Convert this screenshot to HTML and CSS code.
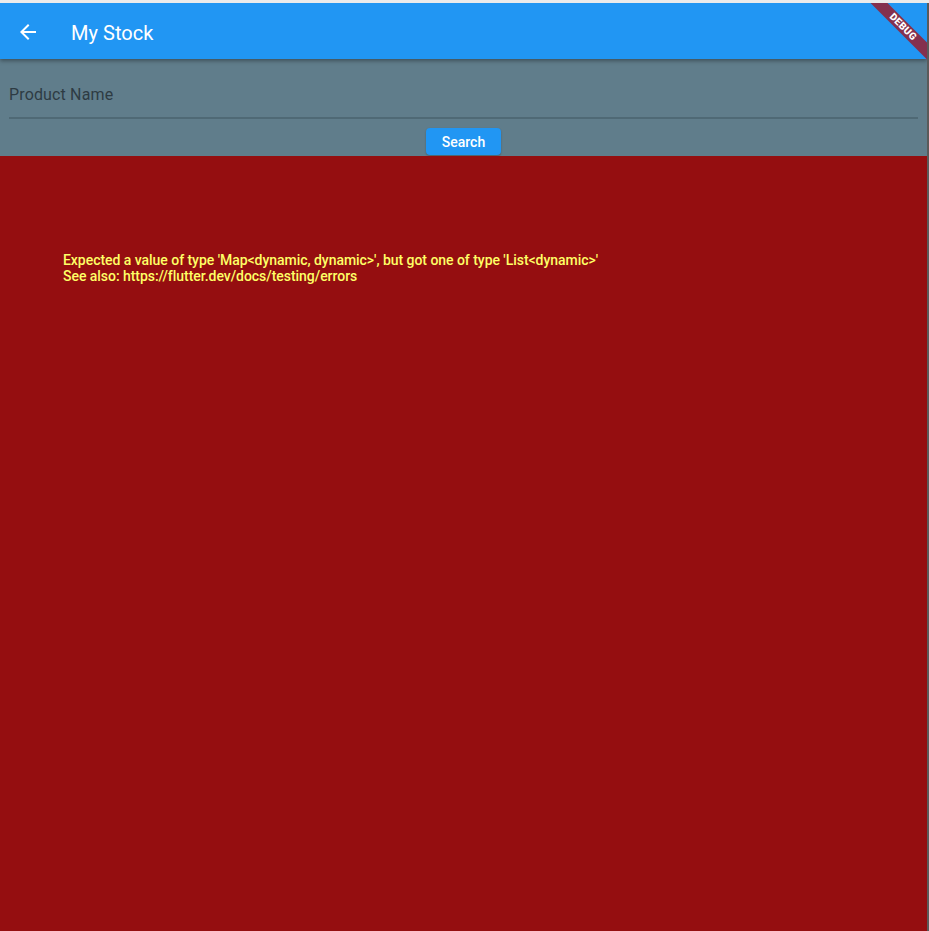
FILE: index.html
```html
<!DOCTYPE html>
<html>
<head>
<meta charset="utf-8">
<link rel="stylesheet" href="styles.css">
</head>
<body>
<div class="topstrip"></div>
<div class="frame">
  <div class="app">
    <header class="appbar">
      <svg class="back" width="24" height="24" viewBox="0 0 24 24"><path fill="#fff" d="M20 11H7.83l5.59-5.59L12 4l-8 8 8 8 1.41-1.41L7.83 13H20v-2z"/></svg>
      <span class="title">My Stock</span>
    </header>
    <section class="form">
      <div class="field">
        <div class="label">Product Name</div>
      </div>
      <div class="actions"><button class="btn">Search</button></div>
    </section>
    <main class="error">
      <p>Expected a value of type 'Map&lt;dynamic, dynamic&gt;', but got one of type 'List&lt;dynamic&gt;'<br>See also: https://flutter.dev/docs/testing/errors</p>
    </main>
    <div class="banner"><span>DEBUG</span></div>
  </div>
  <div class="rightedge"></div>
</div>
</body>
</html>
```
FILE: styles.css
```css
html, body { margin: 0; padding: 0; height: 100%; overflow: hidden; }
body { font-family: Roboto, "Noto Sans", sans-serif; background: #eceff1; display: flex; flex-direction: column; }
.topstrip { height: 3px; background: #ebebeb; flex: none; }
.frame { flex: 1; display: flex; min-height: 0; }
.app { flex: 1; display: flex; flex-direction: column; position: relative; overflow: hidden; }
.rightedge { width: 2px; background: #5a5a5a; flex: none; }
.appbar { height: 56px; flex: none; background: #2196f3; display: flex; align-items: center; padding: 3px 0 0 16px; box-sizing: border-box; box-shadow: 0 2px 4px rgba(0,0,0,0.35); position: relative; z-index: 2; }
.back { width: 24px; height: 24px; margin-right: 31px; margin-top: -2px; }
.title { color: #fff; font-size: 20px; font-weight: 400; letter-spacing: 0.05px; }
.form { height: 97px; flex: none; background: #607d8b; padding: 0 9px; box-sizing: border-box; display: flex; flex-direction: column; }
.field { height: 60px; border-bottom: 2px solid #4f6975; box-sizing: border-box; padding-top: 26px; }
.label { font-size: 16px; color: #2e3b43; line-height: 19px; letter-spacing: 0.15px; }
.actions { display: flex; justify-content: center; padding-top: 9px; }
.btn { width: 75px; height: 27px; background: #2196f3; color: #fff; border: 0; border-radius: 4px; font-family: Roboto, sans-serif; font-size: 14px; font-weight: 500; padding: 0; box-shadow: 0 1px 2px rgba(0,0,0,0.25); }
.error { flex: 1; background: #950e10; padding: 96px 63px; box-sizing: border-box; }
.error p { margin: 0; color: #ffff66; font-size: 14px; font-weight: 500; line-height: 16px; letter-spacing: -0.04px; }
.banner { position: absolute; top: 18px; right: -36px; width: 120px; height: 12px; background: #84304e; transform: rotate(45deg); display: flex; align-items: center; justify-content: center; z-index: 3; }
.banner span { color: #fff; font-size: 10px; font-weight: 900; letter-spacing: 0.3px; line-height: 12px; }
```
